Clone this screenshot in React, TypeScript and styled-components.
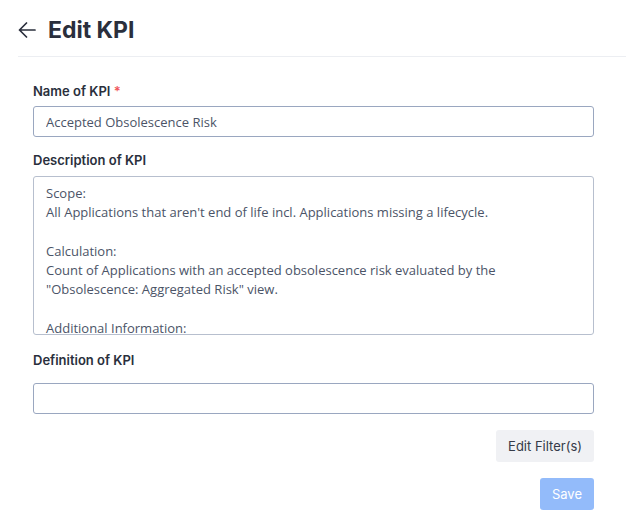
import React from 'react';
import styled, { createGlobalStyle } from 'styled-components';

const TEXT_DARK = '#2a2f3c';
const TEXT_FIELD = '#4b5467';
const BORDER = '#9aa7c0';
const BORDER_SOFT = '#b7bfce';

const GlobalStyle = createGlobalStyle`
  html, body {
    margin: 0;
    padding: 0;
    background: #ffffff;
  }
  body {
    font-family: Inter, 'Liberation Sans', sans-serif;
    color: ${TEXT_DARK};
  }
  * {
    box-sizing: border-box;
  }
`;

const DESCRIPTION = [
  'Scope:',
  "All Applications that aren't end of life incl. Applications missing a lifecycle.",
  '',
  'Calculation:',
  'Count of Applications with an accepted obsolescence risk evaluated by the',
  '"Obsolescence: Aggregated Risk" view.',
  '',
  'Additional Information:',
  'Applications without a lifecycle are counted as not end of life.',
].join('\n');

function BackArrow() {
  return (
    <svg width="18" height="16" viewBox="0 0 18 16" fill="none">
      <path
        d="M17 8H1.5M8.5 1L1.5 8L8.5 15"
        stroke={TEXT_DARK}
        strokeWidth="1.7"
        strokeLinecap="round"
        strokeLinejoin="round"
      />
    </svg>
  );
}

export default function App() {
  return (
    <Page>
      <GlobalStyle />
      <Header>
        <BackButton aria-label="Back">
          <BackArrow />
        </BackButton>
        <Title>Edit KPI</Title>
      </Header>
      <Form>
        <Field>
          <Label spacing={7}>
            Name of KPI <Required>*</Required>
          </Label>
          <Input defaultValue="Accepted Obsolescence Risk" />
        </Field>
        <Field>
          <Label>Description of KPI</Label>
          <TextArea defaultValue={DESCRIPTION} />
        </Field>
        <Field>
          <Label spacing={15} offset={2}>
            Definition of KPI
          </Label>
          <Input defaultValue="" />
        </Field>
        <Actions>
          <Button>Edit Filter(s)</Button>
        </Actions>
        <Actions>
          <Button primary disabled>
            Save
          </Button>
        </Actions>
      </Form>
    </Page>
  );
}

const Page = styled.div`
  width: 626px;
  min-height: 526px;
`;
const Header = styled.header`
  display: flex;
  align-items: center;
  gap: 12px;
  height: 57px;
  margin-left: 18px;
  padding-top: 4px;
  border-bottom: 1px solid #eceef2;
`;
const BackButton = styled.button`
  display: flex;
  align-items: center;
  padding: 0;
  border: none;
  background: none;
  cursor: pointer;
`;
const Title = styled.h1`
  margin: 0;
  font-family: Inter, 'Liberation Sans', sans-serif;
  font-size: 23px;
  font-weight: 700;
  line-height: 30px;
  color: ${TEXT_DARK};
`;
const Form = styled.div`
  display: flex;
  flex-direction: column;
  gap: 15px;
  padding: 26px 32px 0 33px;
`;
const Field = styled.div`
  display: flex;
  flex-direction: column;
`;
const Label = styled.label<{ spacing?: number; offset?: number }>`
  margin-top: ${({ offset = 0 }) => offset}px;
  margin-bottom: ${({ spacing = 8 }) => spacing}px;
  font-family: Inter, 'Liberation Sans', sans-serif;
  font-size: 13px;
  font-weight: 600;
  line-height: 16px;
  color: ${TEXT_DARK};
`;
const Required = styled.span`
  color: #f0555a;
`;
const Input = styled.input`
  height: 31px;
  padding: 0 12px;
  border: 1px solid ${BORDER};
  border-radius: 3px;
  font-family: 'Open Sans', 'Liberation Sans', sans-serif;
  font-size: 13px;
  color: ${TEXT_FIELD};
  outline: none;
`;
const TextArea = styled.textarea`
  height: 159px;
  padding: 7px 12px 5px;
  border: 1px solid ${BORDER_SOFT};
  border-radius: 3px;
  font-family: 'Open Sans', 'Liberation Sans', sans-serif;
  font-size: 13px;
  line-height: 19.3px;
  color: ${TEXT_FIELD};
  resize: none;
  overflow: hidden;
  outline: none;
`;
const Actions = styled.div`
  display: flex;
  justify-content: flex-end;
  margin-top: 1px;
`;
const Button = styled.button<{ primary?: boolean }>`
  height: 32px;
  padding: 0 12px;
  border: none;
  border-radius: 3px;
  background: ${({ primary }) => (primary ? '#93bbfa' : '#f0f1f4')};
  color: ${({ primary }) => (primary ? '#ffffff' : '#353b48')};
  font-family: Inter, 'Liberation Sans', sans-serif;
  font-size: 13px;
  cursor: ${({ disabled }) => (disabled ? 'default' : 'pointer')};
`;
